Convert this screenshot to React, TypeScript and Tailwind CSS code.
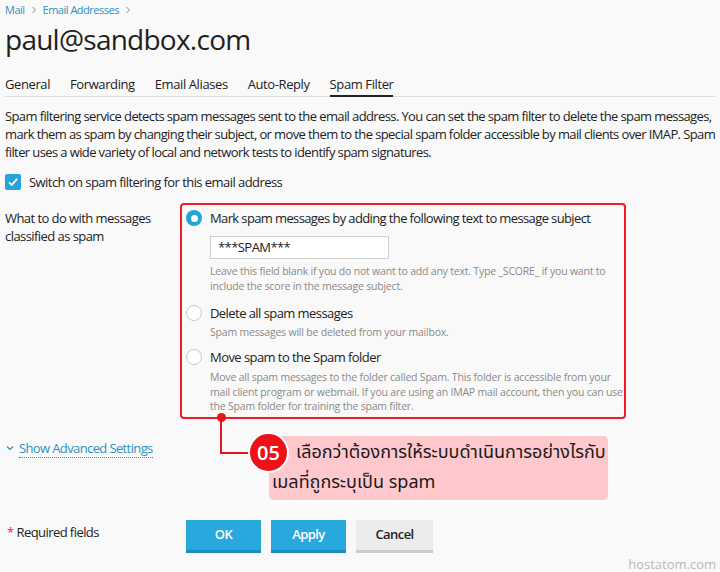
function Radio({ checked }: { checked?: boolean }) {
  return checked ? (
    <span className="flex h-4 w-4 shrink-0 items-center justify-center rounded-full bg-[#25a4dc]">
      <span className="h-[7px] w-[7px] rounded-full bg-white" />
    </span>
  ) : (
    <span className="h-4 w-4 shrink-0 rounded-full border border-[#c9c9c9] bg-white" />
  );
}

function Chevron() {
  return (
    <svg width="6" height="8" viewBox="0 0 6 8" className="mx-[6px]">
      <path d="M1.5 1 L4.5 4 L1.5 7" fill="none" stroke="#8a8a8a" strokeWidth="1" />
    </svg>
  );
}

export default function App() {
  return (
    <div className="relative h-[572px] w-[720px] overflow-hidden bg-[#f9f9f9] font-['Open_Sans',sans-serif] tracking-[-0.56px] text-[#222]">
      <div className="px-[5px]">
        {/* Breadcrumb */}
        <div className="flex h-[20px] items-center pb-[1px] text-[11px] leading-[14px] tracking-[-0.5px]">
          <span className="text-[#2f8fc3]">Mail</span>
          <Chevron />
          <span className="text-[#2f8fc3]">Email Addresses</span>
          <Chevron />
        </div>
        {/* Title */}
        <h1 className="text-[28px] leading-[38px] font-normal tracking-[-0.75px] text-[#1f1f1f]">paul@sandbox.com</h1>
        {/* Tabs */}
        <div className="mt-[17px] flex gap-[20px] border-b border-[#dcdcdc] text-[13px] leading-[18px] tracking-[-0.4px]">
          <span className="pb-[3px]">General</span>
          <span className="pb-[3px]">Forwarding</span>
          <span className="pb-[3px]">Email Aliases</span>
          <span className="pb-[3px]">Auto-Reply</span>
          <span className="-mb-px border-b-2 border-[#222] pb-[2px]">Spam Filter</span>
        </div>
        {/* Description */}
        <p className="mt-[10px] whitespace-nowrap text-[13px] leading-[18px] tracking-[-0.61px]">
          Spam filtering service detects spam messages sent to the email address. You can set the spam filter to delete the spam messages,
          <br />
          mark them as spam by changing their subject, or move them to the special spam folder accessible by mail clients over IMAP. Spam
          <br />
          filter uses a wide variety of local and network tests to identify spam signatures.
        </p>
        {/* Checkbox */}
        <div className="mt-[12px] flex items-center gap-[8px] text-[13px] leading-[18px]">
          <span className="flex h-4 w-4 items-center justify-center rounded-[2px] bg-[#25a4dc]">
            <svg width="12" height="12" viewBox="0 0 12 12">
              <path d="M2 6.3 L4.8 9 L10 2.8" fill="none" stroke="white" strokeWidth="1.8" />
            </svg>
          </span>
          <span>Switch on spam filtering for this email address</span>
        </div>
        {/* Form row */}
        <div className="mt-[12px] flex text-[13px]">
          <div className="w-[175px] pt-[6px] leading-[18px]">
            What to do with messages
            <br />
            classified as spam
          </div>
          <div className="w-[446px] rounded-[4px] border-2 border-[#ee1c25] pb-[3px] pl-[4px] pt-[4px]">
            <div className="flex items-center gap-[8px] leading-[18px] tracking-[-0.62px]">
              <Radio checked />
              <span className="whitespace-nowrap">Mark spam messages by adding the following text to message subject</span>
            </div>
            <div className="ml-[24px] mt-[9px] flex h-[23px] w-[179px] items-center border border-[#cfcfcf] bg-white px-[7px] text-[13px]">
              ***SPAM***
            </div>
            <p className="ml-[24px] mt-[5px] whitespace-nowrap text-[10.5px] leading-[15px] tracking-[-0.2px] text-[#8a8a8a]">
              Leave this field blank if you do not want to add any text. Type _SCORE_ if you want to
              <br />
              include the score in the message subject.
            </p>
            <div className="mt-[10px] flex items-center gap-[8px] leading-[18px]">
              <Radio />
              <span>Delete all spam messages</span>
            </div>
            <p className="ml-[24px] mt-[3px] text-[10.5px] leading-[15px] tracking-[-0.2px] text-[#8a8a8a]">
              Spam messages will be deleted from your mailbox.
            </p>
            <div className="mt-[8px] flex items-center gap-[8px] leading-[18px]">
              <Radio />
              <span>Move spam to the Spam folder</span>
            </div>
            <p className="ml-[24px] mt-[4px] whitespace-nowrap text-[10.5px] leading-[14.5px] tracking-[-0.2px] text-[#8a8a8a]">
              Move all spam messages to the folder called Spam. This folder is accessible from your
              <br />
              mail client program or webmail. If you are using an IMAP mail account, then you can use
              <br />
              the Spam folder for training the spam filter.
            </p>
          </div>
        </div>
        {/* Advanced */}
        <div className="mt-[20px] flex items-center text-[13px] leading-[18px] tracking-[-0.62px]">
          <svg width="8" height="6" viewBox="0 0 8 6" className="ml-[1px] mr-[5px]">
            <path d="M1 1.5 L4 4.5 L7 1.5" fill="none" stroke="#2f8fc3" strokeWidth="1.2" />
          </svg>
          <span className="border-b border-dotted border-[#2f8fc3] text-[#2f8fc3]">Show Advanced Settings</span>
        </div>
        {/* Buttons */}
        <div className="mt-[62px] flex items-start text-[13px]">
          <div className="w-[181px] pl-[2px] pt-[3px] leading-[18px]">
            <span className="text-[#e0303a]">*</span> Required fields
          </div>
          <div className="flex gap-[10px]">
            <button className="h-[33px] w-[75px] border-b-[3px] border-[#1d8cc0] bg-[#29a8de] font-semibold text-white">OK</button>
            <button className="h-[33px] w-[75px] border-b-[3px] border-[#1d8cc0] bg-[#29a8de] font-semibold text-white">Apply</button>
            <button className="h-[33px] w-[77px] border-b-[3px] border-[#cacaca] bg-[#ececec] font-semibold text-[#222]">Cancel</button>
          </div>
        </div>
      </div>

      {/* Annotation callout */}
      <div className="absolute left-[217px] top-[413px] h-[9px] w-[9px] rounded-full bg-[#e8141c]" />
      <div className="absolute left-[220px] top-[418px] h-[36px] w-[2px] bg-[#e8141c]" />
      <div className="absolute left-[220px] top-[452px] h-[2px] w-[34px] bg-[#e8141c]" />
      <div className="absolute left-[269px] top-[436px] h-[64px] w-[339px] rounded-[5px] bg-[#ffc8cc] pl-[27px] pt-[2px] font-['Noto_Sans_Thai','Noto_Sans',sans-serif] text-[18px] leading-[30px] tracking-normal text-[#1a1a1a]">
        เลือกว่าต้องการให้ระบบดำเนินการอย่างไรกับ
        <br />
        <span className="-ml-[24px]">เมลที่ถูกระบุเป็น spam</span>
      </div>
      <div className="absolute left-[248px] top-[432px] flex h-[41px] w-[41px] items-center justify-center rounded-full border-[2.5px] border-white bg-[#ee1119] text-[20px] font-semibold tracking-normal text-white">
        05
      </div>

      <div className="absolute bottom-[0px] right-[4px] text-[13px] leading-[16px] tracking-normal text-[#b9b9b9]">hostatom.com</div>
    </div>
  );
}
